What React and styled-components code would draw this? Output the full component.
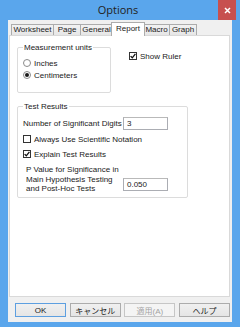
import React from 'react';
import styled, { createGlobalStyle, css } from 'styled-components';

const GlobalStyle = createGlobalStyle`
  html, body {
    margin: 0;
    padding: 0;
    background: #ffffff;
  }
  * {
    box-sizing: border-box;
  }
`;

const UI_FONT = `"Liberation Sans", "Noto Sans CJK JP", sans-serif`;

// --- Window frame ---
const Window = styled.div`
  width: 240px;
  height: 327px;
  background: #5aa6ec;
  display: flex;
  flex-direction: column;
  font-family: ${UI_FONT};
  font-size: 8px;
  color: #1a1a1a;
  overflow: hidden;
`;

const TitleBar = styled.div`
  height: 20px;
  display: grid;
  grid-template-columns: 1fr auto 1fr;
  align-items: start;
  padding-right: 4px;
`;

const Title = styled.div`
  grid-column: 2;
  font-size: 11px;
  line-height: 20px;
  color: #222;
  font-family: "Open Sans", "Liberation Sans", sans-serif;
`;

const CloseButton = styled.div`
  grid-column: 3;
  justify-self: end;
  width: 18px;
  height: 20px;
  background: #c7504f;
  display: flex;
  align-items: center;
  justify-content: center;
`;

const Client = styled.div`
  flex: 1;
  margin: 0 8px 5px 8px;
  background: #f0f0f0;
  padding: 2px 2px 0 1px;
  display: flex;
  flex-direction: column;
`;

// --- Tabs ---
const TabRow = styled.div`
  display: flex;
  align-items: flex-end;
  padding-left: 2px;
  height: 13px;
  position: relative;
  z-index: 1;
`;

const Tab = styled.div`
  width: ${(p) => p.$w}px;
  height: 11px;
  line-height: 10px;
  text-align: center;
  border: 1px solid #acacac;
  border-bottom: none;
  margin-right: -1px;
  background: linear-gradient(#f2f2f2, #e6e6e6);
  white-space: nowrap;

  ${(p) =>
    p.$active &&
    css`
      height: 14px;
      line-height: 12px;
      background: #ffffff;
      margin: 0 -2px 0 -1px;
      position: relative;
      top: 1px;
    `}
`;

const Panel = styled.div`
  flex: 1;
  background: #ffffff;
  border: 1px solid #d9d9d9;
  padding: 6px 0 0 7px;
  display: flex;
  flex-direction: column;
  gap: 8px;
`;

const TopRow = styled.div`
  display: flex;
  align-items: flex-start;
`;

// --- Group box ---
const GroupBox = styled.fieldset`
  margin: 0;
  width: ${(p) => p.$width}px;
  height: ${(p) => p.$height}px;
  border: 1px solid #dcdcdc;
  border-radius: 2px;
  padding: 0 5px;
  display: flex;
  flex-direction: column;
`;

const Legend = styled.legend`
  padding: 0 1px;
  line-height: 11px;
`;

const OptionLine = styled.label`
  display: flex;
  align-items: center;
  gap: 3px;
  height: 12px;
  white-space: nowrap;
  margin-top: ${(p) => p.$top || 0}px;
`;

const Radio = styled.span`
  width: 8px;
  height: 8px;
  border-radius: 50%;
  border: 1px solid #8a8a8a;
  background: #fff;
  display: flex;
  align-items: center;
  justify-content: center;

  &::after {
    content: '';
    width: 4px;
    height: 4px;
    border-radius: 50%;
    background: ${(p) => (p.$checked ? '#1a1a1a' : 'transparent')};
  }
`;

const Box = styled.span`
  width: 8px;
  height: 8px;
  border: 1px solid #333;
  background: #fff;
  display: flex;
  align-items: center;
  justify-content: center;
`;

const ShowRuler = styled(OptionLine)`
  margin: 8px 0 0 18px;
`;

const FieldRow = styled.div`
  display: flex;
  align-items: center;
  justify-content: space-between;
  width: 145px;
  margin-top: ${(p) => p.$top || 0}px;
`;

const MultiLabel = styled.div`
  line-height: 9.5px;
  padding-left: 3px;
`;

const TextBox = styled.div`
  width: 45px;
  height: 13px;
  border: 1px solid #abadb3;
  border-top-color: #b9b9b9;
  background: #fff;
  padding: 0 3px;
  line-height: 11px;
  align-self: ${(p) => p.$align || 'center'};
  margin-top: ${(p) => p.$top || 0}px;
`;

// --- Buttons ---
const ButtonRow = styled.div`
  display: grid;
  grid-template-columns: repeat(4, 51px);
  justify-content: space-between;
  padding: 6px 0 5px 6px;
`;

const Button = styled.div`
  height: 14px;
  border: 1px solid ${(p) => (p.$default ? '#5d9fe0' : p.$disabled ? '#c6c6c6' : '#acacac')};
  background: ${(p) => (p.$disabled ? '#f4f4f4' : 'linear-gradient(#f0f0f0, #e5e5e5)')};
  color: ${(p) => (p.$disabled ? '#a3a3a3' : '#1a1a1a')};
  display: flex;
  align-items: center;
  justify-content: center;
  font-size: 8px;
`;

const Check = () => (
  <svg width="6" height="6" viewBox="0 0 6 6">
    <path d="M0.6 3.1 L2.3 4.8 L5.4 0.8" fill="none" stroke="#111" strokeWidth="1.3" />
  </svg>
);

const App = () => {
  return (
    <>
      <GlobalStyle />
      <Window>
        <TitleBar>
          <Title>Options</Title>
          <CloseButton>
            <svg width="7" height="7" viewBox="0 0 7 7">
              <path d="M1 1 L6 6 M6 1 L1 6" stroke="#fff" strokeWidth="1.5" />
            </svg>
          </CloseButton>
        </TitleBar>
        <Client>
          <TabRow>
            <Tab $w={43}>Worksheet</Tab>
            <Tab $w={28}>Page</Tab>
            <Tab $w={33}>General</Tab>
            <Tab $w={34} $active>Report</Tab>
            <Tab $w={27}>Macro</Tab>
            <Tab $w={28}>Graph</Tab>
          </TabRow>
          <Panel>
            <TopRow>
              <GroupBox $width={94} $height={51}>
                <Legend>Measurement units</Legend>
                <OptionLine $top={4}>
                  <Radio />
                  Inches
                </OptionLine>
                <OptionLine>
                  <Radio $checked />
                  Centimeters
                </OptionLine>
              </GroupBox>
              <ShowRuler>
                <Box>
                  <Check />
                </Box>
                Show Ruler
              </ShowRuler>
            </TopRow>
            <GroupBox $width={171} $height={97}>
              <Legend>Test Results</Legend>
              <FieldRow $top={5}>
                <span>Number of Significant Digits</span>
                <TextBox>3</TextBox>
              </FieldRow>
              <OptionLine $top={3}>
                <Box />
                Always Use Scientific Notation
              </OptionLine>
              <OptionLine $top={3}>
                <Box>
                  <Check />
                </Box>
                Explain Test Results
              </OptionLine>
              <FieldRow $top={5}>
                <MultiLabel>
                  P Value for Significance in
                  <br />
                  Main Hypothesis Testing
                  <br />
                  and Post-Hoc Tests
                </MultiLabel>
                <TextBox $align="flex-start" $top={13}>
                  0.050
                </TextBox>
              </FieldRow>
            </GroupBox>
          </Panel>
          <ButtonRow>
            <Button $default>OK</Button>
            <Button>キャンセル</Button>
            <Button $disabled>適用(A)</Button>
            <Button>ヘルプ</Button>
          </ButtonRow>
        </Client>
      </Window>
    </>
  );
};

export default App;
